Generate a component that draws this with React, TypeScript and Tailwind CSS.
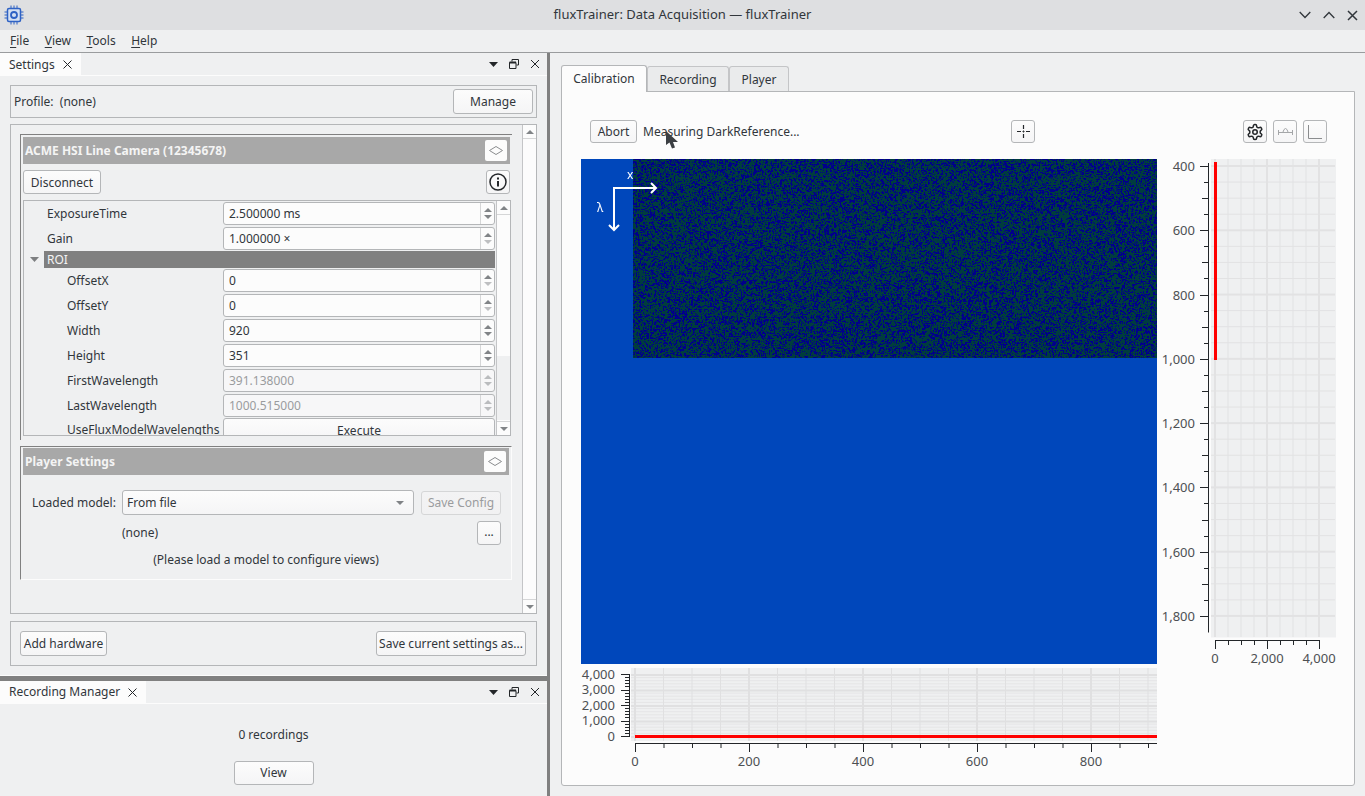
import { useEffect, useRef } from 'react';
import type { ReactNode } from 'react';

const btnBase = 'flex items-center whitespace-nowrap rounded-[3px] border bg-gradient-to-b';
const btn = `${btnBase} justify-center border-[#b4b6b8] from-[#fcfcfc] to-[#f5f5f6]`;

const Arrow = ({ dir, faded }: { dir: 'up' | 'down'; faded?: boolean }) => (
  <svg width="8" height="4" viewBox="0 0 8 4" className={faded ? 'opacity-30' : 'opacity-60'}>
    <path d={dir === 'up' ? 'M0 4 L4 0 L8 4Z' : 'M0 0 L4 4 L8 0Z'} fill="#31363b" />
  </svg>
);

const SpinRow = ({
  label,
  value,
  indent,
  disabled,
  dimDown,
}: {
  label: string;
  value: string;
  indent?: boolean;
  disabled?: boolean;
  dimDown?: boolean;
}) => (
  <div className="flex h-[25px] shrink-0 items-center">
    <span className={`w-[199px] whitespace-nowrap ${indent ? 'pl-[43px]' : 'pl-[23px]'}`}>{label}</span>
    <div
      className={`flex h-[23px] w-[272px] items-center rounded-[3px] border border-[#b4b6b8] ${disabled ? 'bg-[#f7f7f8] text-[#9a9c9e]' : 'bg-[#fcfcfc]'}`}
    >
      <span className="flex-1 pl-[5px]">{value}</span>
      <div className="flex h-full w-[14px] flex-col items-center justify-center gap-[3px] border-l border-[#d5d6d7]">
        <Arrow dir="up" faded={disabled} />
        <Arrow dir="down" faded={disabled || dimDown} />
      </div>
    </div>
  </div>
);

const Scrollbar = ({ thumbTop, thumbHeight }: { thumbTop: number; thumbHeight: number }) => (
  <div className="relative flex w-[14px] shrink-0 flex-col justify-between border-l border-[#c4c5c7] bg-[#fcfcfc]">
    <div className="flex h-[14px] items-center justify-center border-b border-[#d5d6d7]">
      <Arrow dir="up" />
    </div>
    <div
      className="absolute left-0 right-0 bg-[#eff0f1]"
      style={{ top: thumbTop, height: thumbHeight }}
    />
    <div className="flex h-[14px] items-center justify-center border-t border-[#d5d6d7]">
      <Arrow dir="down" />
    </div>
  </div>
);

const DockButtons = () => (
  <div className="flex items-center gap-[11px] pr-[7px]">
    <svg width="9" height="5" viewBox="0 0 9 5">
      <path d="M0 0 L9 0 L4.5 5Z" fill="#232629" />
    </svg>
    <svg width="10" height="10" viewBox="0 0 10 10" fill="none" stroke="#232629">
      <path d="M3 2.5V.5H9.5V6H7.5" />
      <path d="M.5 3.5H7V9.5H.5Z" />
      <path d="M.5 3.5H7" strokeWidth="2" />
    </svg>
    <svg width="10" height="10" viewBox="0 0 10 10" fill="none" stroke="#232629">
      <path d="M1 1L9 9M9 1L1 9" />
    </svg>
  </div>
);

const DockHeader = ({ title, width }: { title: string; width: string }) => (
  <div className="flex h-[23px] shrink-0 items-center justify-between border-b border-[#fcfcfc]">
    <div className={`flex h-full items-center gap-[8px] bg-[#fcfcfc] pl-[9px] ${width}`}>
      <span>{title}</span>
      <svg width="9" height="9" viewBox="0 0 9 9" fill="none" stroke="#232629">
        <path d="M.5 .5L8.5 8.5M8.5 .5L.5 8.5" />
      </svg>
    </div>
    <DockButtons />
  </div>
);

const Diamond = () => (
  <div className="flex h-[21px] w-[22px] items-center justify-center rounded-[2px] bg-[#fcfcfc]">
    <svg width="14" height="9" viewBox="0 0 14 9" fill="none" stroke="#8a8c8e">
      <path d="M.5 4.5L7 .5L13.5 4.5L7 8.5Z" />
    </svg>
  </div>
);

const GroupHeader = ({ title }: { title: string }) => (
  <div className="mx-[2px] flex h-[27px] items-center justify-between bg-[#a8a8a8] pl-[2px] pr-[3px] font-bold text-[#f4f4f4]">
    <span>{title}</span>
    <Diamond />
  </div>
);

const SettingsPanel = () => (
  <div className="flex h-[490px] border border-[#b4b6b8]">
    <div className="min-w-0 flex-1 pl-[9px] pt-[9px]">
      {/* camera group */}
      <div className="h-[306px] overflow-hidden border-l border-t border-[#808080] pt-[2px]">
        <GroupHeader title="ACME HSI Line Camera (12345678)" />
        <div className="flex items-center justify-between pl-[2px] pr-[2px] pt-[6px]">
          <button className={`${btn} h-[24px] w-[78px] pt-[1px]`}>Disconnect</button>
          <button className={`${btn} h-[24px] w-[24px]`}>
            <svg width="20" height="20" viewBox="0 0 20 20" fill="none" stroke="#232629" strokeWidth="1.5">
              <circle cx="10" cy="10" r="8" />
              <path d="M10 9V14.5" strokeWidth="2" />
              <path d="M10 5.5V7.5" strokeWidth="2" />
            </svg>
          </button>
        </div>
        <div className="ml-[2px] mt-[6px] flex h-[236px] w-[488px] border border-[#b4b6b8]">
          <div className="flex min-w-0 flex-1 flex-col overflow-hidden">
            <SpinRow label="ExposureTime" value="2.500000 ms" />
            <SpinRow label="Gain" value="1.000000 ×" dimDown />
            <div className="flex h-[17px] shrink-0 items-center">
              <svg width="9" height="5" viewBox="0 0 9 5" className="ml-[6px] mr-[5px] opacity-70">
                <path d="M0 0 L9 0 L4.5 5Z" fill="#4d5053" />
              </svg>
              <div className="flex h-full w-[451px] items-center bg-[#808080] pl-[3px] text-[#f4f4f4]">ROI</div>
            </div>
            <SpinRow indent label="OffsetX" value="0" dimDown />
            <SpinRow indent label="OffsetY" value="0" dimDown />
            <SpinRow indent label="Width" value="920" />
            <SpinRow indent label="Height" value="351" />
            <SpinRow indent disabled label="FirstWavelength" value="391.138000" />
            <SpinRow indent disabled label="LastWavelength" value="1000.515000" />
            <div className="flex h-[25px] shrink-0 items-start">
              <span className="w-[199px] whitespace-nowrap pl-[43px] pt-[3px]">UseFluxModelWavelengths</span>
              <button className={`${btn} h-[24px] w-[272px] pt-[2px]`}>Execute</button>
            </div>
          </div>
          <Scrollbar thumbTop={155} thumbHeight={64} />
        </div>
      </div>
      {/* player group */}
      <div className="mt-[6px] h-[134px] border border-b-[#fcfcfc] border-l-[#808080] border-r-[#fcfcfc] border-t-[#808080] pt-[1px]">
        <GroupHeader title="Player Settings" />
        <div className="mt-[15px] flex h-[25px] items-center pl-[11px] pr-[10px]">
          <span className="w-[90px]">Loaded model:</span>
          <div className={`${btnBase} h-[25px] w-[292px] justify-between border-[#b4b6b8] from-[#fcfcfc] to-[#f5f5f6] pl-[4px] pr-[9px]`}>
            <span>From file</span>
            <Arrow dir="down" />
          </div>
          <button className={`${btnBase} ml-[7px] h-[24px] w-[80px] justify-center border-[#d5d6d7] from-[#f3f3f4] to-[#f1f1f2] text-[#9a9c9e]`}>
            Save Config
          </button>
        </div>
        <div className="mt-[6px] flex h-[24px] items-center justify-between pl-[101px] pr-[10px]">
          <span>(none)</span>
          <button className={`${btn} h-[24px] w-[24px] pb-[2px]`}>...</button>
        </div>
        <div className="mt-[3px] text-center leading-[24px]">(Please load a model to configure views)</div>
      </div>
    </div>
    <div className="ml-[10px] flex">
      <Scrollbar thumbTop={0} thumbHeight={0} />
    </div>
  </div>
);

const LeftColumn = () => (
  <div className="flex w-[547px] shrink-0 flex-col">
    <DockHeader title="Settings" width="w-[81px] pt-[1px]" />
    <div className="flex h-[600px] flex-col px-[10px] pt-[9px]">
      <div className="flex h-[33px] items-center justify-between border border-[#b4b6b8] pl-[3px] pr-[3px]">
        <span className="whitespace-pre">Profile:  (none)</span>
        <button className={`${btn} h-[25px] w-[80px]`}>Manage</button>
      </div>
      <div className="mt-[6px]">
        <SettingsPanel />
      </div>
      <div className="mt-[7px] flex h-[45px] items-center justify-between border border-[#b4b6b8] pl-[9px] pr-[10px]">
        <button className={`${btn} h-[25px] w-[87px]`}>Add hardware</button>
        <button className={`${btn} h-[25px] w-[150px]`}>Save current settings as...</button>
      </div>
    </div>
    <div className="-mt-[1px] h-[1px] bg-[#fcfcfc]" />
    <div className="h-[5px] shrink-0 bg-[#808080]" />
    <DockHeader title="Recording Manager" width="w-[146px]" />
    <div className="flex flex-1 flex-col items-center pt-[22px]">
      <span className="leading-[18px]">0 recordings</span>
      <button className={`${btn} mt-[17px] h-[24px] w-[80px]`}>View</button>
    </div>
  </div>
);

const NoiseImage = () => {
  const ref = useRef<HTMLCanvasElement>(null);
  useEffect(() => {
    const ctx = ref.current?.getContext('2d');
    if (!ctx) return;
    const { width, height } = ctx.canvas;
    const img = ctx.createImageData(width, height);
    let seed = 12345;
    const rnd = () => {
      seed = (seed * 1664525 + 1013904223) >>> 0;
      return (seed >>> 8) / 16777216;
    };
    const cells = new Uint8Array(width * height);
    for (let y = 0; y < height; y++) {
      // some rows come out greener or bluer, like line noise on the sensor
      const bias = rnd() * 0.16 - 0.08;
      for (let x = 0; x < width; x++) {
        const r = rnd();
        let green: number;
        if (r < 0.12 && x > 0) green = cells[y * width + x - 1];
        else if (r < 0.24 && y > 0) green = cells[(y - 1) * width + x];
        else green = rnd() < 0.62 + bias ? 1 : 0;
        cells[y * width + x] = green;
        const i = (y * width + x) * 4;
        img.data[i] = 0;
        img.data[i + 1] = green ? 60 : 0;
        img.data[i + 2] = green ? 62 : 138;
        img.data[i + 3] = 255;
      }
    }
    ctx.putImageData(img, 0, 0);
  }, []);
  return <canvas ref={ref} width={524} height={199} className="block h-[199px] w-[524px]" />;
};

const HeatMap = () => (
  <div className="relative h-[505px] w-[576px] bg-[#0047bb]">
    <div className="pl-[52px]">
      <NoiseImage />
    </div>
    <svg width="90" height="80" viewBox="0 0 90 80" className="absolute left-0 top-0" fill="none" stroke="#fff" strokeWidth="2">
      <path d="M33 71V29H75" />
      <path d="M70 24L75 29L70 34" />
      <path d="M28 66L33 71L38 66" />
    </svg>
    <span className="absolute left-[46px] top-[7px] text-white">x</span>
    <span className="absolute left-[16px] top-[40px] text-white">λ</span>
  </div>
);

const range = (from: number, to: number, step: number) => {
  const out: number[] = [];
  for (let v = from; v <= to + 0.01; v += step) out.push(v);
  return out;
};

const labelClass = 'fill-[#4d5053] text-[13px]';

const SidePlot = () => {
  const ys = range(7, 473, 16.07);
  const xs = range(58, 162, 13);
  const tickStart = (i: number) => (i % 4 === 0 ? 43 : i % 2 === 0 ? 45 : 47);
  return (
    <svg width="183" height="511" viewBox="0 0 183 511" className="block">
      <rect x="54" y="0" width="125" height="478.5" fill="#eff0f1" />
      {ys.map((y, i) => (
        <rect key={y} x="54" y={y - (i % 4 === 0 ? 1 : 0.5)} width="124" height={i % 4 === 0 ? 2 : 1} fill="#e2e2e3" />
      ))}
      {xs.map((x, i) => (
        <rect key={x} x={x - (i % 4 === 0 ? 1 : 0.5)} y="0" width={i % 4 === 0 ? 2 : 1} height="478" fill="#e2e2e3" />
      ))}
      <rect x="57" y="3" width="3" height="198" fill="#ff0000" />
      <path d="M51.5 4V473.5" stroke="#232629" fill="none" />
      {ys.map((y, i) => (
        <path key={y} d={`M${tickStart(i)} ${Math.round(y) + 0.5}H51`} stroke="#232629" />
      ))}
      {['400', '600', '800', '1,000', '1,200', '1,400', '1,600', '1,800'].map((t, i) => (
        <text key={t} x="38" y={7 + i * 64.28 + 5} textAnchor="end" className={labelClass}>
          {t}
        </text>
      ))}
      <path d="M58 481.5H162" stroke="#232629" />
      {xs.map((x, i) => (
        <path key={x} d={`M${x + 0.5} 481V${i % 4 === 0 ? 490 : 486}`} stroke="#232629" />
      ))}
      {['0', '2,000', '4,000'].map((t, i) => (
        <text key={t} x={58 + i * 52} y="504" textAnchor="middle" className={labelClass}>
          {t}
        </text>
      ))}
    </svg>
  );
};

const BottomPlot = () => {
  const xs = range(54, 576, 28.5);
  const hs = range(10, 72, 3.1);
  return (
    <svg width="576" height="111" viewBox="0 0 576 111" className="block">
      <rect x="50" y="4" width="526" height="73" fill="#eff0f1" />
      {hs.map((y, i) => (
        <rect key={y} x="50" y={y} width="526" height={i % 5 === 0 ? 2 : 1} fill={i % 5 === 0 ? '#e0e0e1' : '#e5e5e6'} />
      ))}
      {xs.map((x, i) => (
        <rect key={x} x={x - (i % 4 === 0 ? 1 : 0.5)} y="4" width={i % 4 === 0 ? 2 : 1} height="73" fill="#e0e0e1" />
      ))}
      <rect x="54" y="71" width="522" height="3" fill="#ff0000" />
      <path d="M48.5 10V73" stroke="#232629" />
      {hs.map((y, i) => (
        <path key={y} d={`M${i % 5 === 0 ? 40 : 44} ${Math.round(y) + 0.5}H48`} stroke="#232629" />
      ))}
      {['4,000', '3,000', '2,000', '1,000', '0'].map((t, i) => (
        <text key={t} x="34" y={14.5 + i * 15.6} textAnchor="end" className={labelClass}>
          {t}
        </text>
      ))}
      <path d="M54 79.5H576" stroke="#232629" />
      {xs.map((x, i) => (
        <path key={x} d={`M${x + 0.5} 79V${i % 4 === 0 ? 88 : 84}`} stroke="#232629" />
      ))}
      {['0', '200', '400', '600', '800'].map((t, i) => (
        <text key={t} x={54 + i * 114} y="102" textAnchor="middle" className={labelClass}>
          {t}
        </text>
      ))}
    </svg>
  );
};

const ToolButton = ({ children }: { children: ReactNode }) => (
  <button className={`${btn} h-[23px] w-[24px]`}>{children}</button>
);

const Calibration = () => (
  <div className="flex h-[695px] flex-col rounded-b-[3px] border border-[#b4b6b8] bg-[#fcfcfc] pl-[19px] pt-[28px]">
    <div className="relative flex h-[23px] items-center pl-[9px]">
      <button className={`${btn} h-[23px] w-[47px] pt-[1px]`}>Abort</button>
      <span className="ml-[6px] pt-[1px]">Measuring DarkReference...</span>
      <div className="absolute left-[430px] top-0">
        <ToolButton>
          <svg width="13" height="13" viewBox="0 0 13 13" stroke="#232629" fill="none">
            <path d="M6.5 0V4M6.5 9V13M0 6.5H4M9 6.5H13" strokeWidth="1.2" />
            <path d="M6 6H7V7H6Z" />
          </svg>
        </ToolButton>
      </div>
      <div className="absolute left-[662px] top-0 flex gap-[6px]">
        <ToolButton>
          <svg width="18" height="18" viewBox="0 0 24 24" fill="none" stroke="#232629" strokeWidth="2">
            <path d="M12.22 2h-.44a2 2 0 0 0-2 2v.18a2 2 0 0 1-1 1.73l-.43.25a2 2 0 0 1-2 0l-.15-.08a2 2 0 0 0-2.73.73l-.22.38a2 2 0 0 0 .73 2.73l.15.1a2 2 0 0 1 1 1.72v.51a2 2 0 0 1-1 1.74l-.15.09a2 2 0 0 0-.73 2.73l.22.38a2 2 0 0 0 2.73.73l.15-.08a2 2 0 0 1 2 0l.43.25a2 2 0 0 1 1 1.73V20a2 2 0 0 0 2 2h.44a2 2 0 0 0 2-2v-.18a2 2 0 0 1 1-1.73l.43-.25a2 2 0 0 1 2 0l.15.08a2 2 0 0 0 2.73-.73l.22-.39a2 2 0 0 0-.73-2.73l-.15-.08a2 2 0 0 1-1-1.74v-.5a2 2 0 0 1 1-1.74l.15-.09a2 2 0 0 0 .73-2.73l-.22-.38a2 2 0 0 0-2.73-.73l-.15.08a2 2 0 0 1-2 0l-.43-.25a2 2 0 0 1-1-1.73V4a2 2 0 0 0-2-2z" />
            <circle cx="12" cy="12" r="3" />
          </svg>
        </ToolButton>
        <ToolButton>
          <svg width="15" height="9" viewBox="0 0 15 9" fill="none" stroke="#a4a6a8">
            <path d="M.5 3V8M14.5 3V8M.5 5.5H14.5" />
            <path d="M5 5L6 2.5L7.5 1.5L9 2.5L10 5" />
          </svg>
        </ToolButton>
        <ToolButton>
          <svg width="14" height="14" viewBox="0 0 14 14" fill="none" stroke="#8a8c8e">
            <path d="M.5 0V13.5H14" />
          </svg>
        </ToolButton>
      </div>
    </div>
    <div className="mt-[16px] flex">
      <div className="flex flex-col">
        <HeatMap />
        <BottomPlot />
      </div>
      <SidePlot />
    </div>
  </div>
);

const RightColumn = () => (
  <div className="flex min-w-0 flex-1 flex-col pl-[11px] pr-[10px] pt-[11px]">
    <div className="flex h-[27px] items-end">
      <div className="relative top-[1px] z-10 flex h-[27px] w-[86px] items-center justify-center rounded-t-[3px] border border-b-0 border-[#b4b6b8] bg-[#fcfcfc]">
        Calibration
      </div>
      <div className="flex h-[25px] w-[82px] items-center justify-center rounded-t-[3px] border border-b-0 border-[#c4c5c7] bg-[#eaebec] pt-[1px]">
        Recording
      </div>
      <div className="flex h-[25px] w-[60px] items-center justify-center rounded-t-[3px] border border-b-0 border-[#c4c5c7] bg-[#eaebec] pt-[1px]">
        Player
      </div>
    </div>
    <Calibration />
  </div>
);

const TitleBar = () => (
  <div className="relative flex h-[30px] shrink-0 items-center justify-center bg-[#dedfe1]">
    <svg width="20" height="20" viewBox="0 0 20 20" fill="none" stroke="#2f62c4" className="absolute left-[4px] top-[5px]">
      <rect x="3.5" y="3.5" width="13" height="13" rx="1.5" strokeWidth="1.5" fill="#d5e0f2" />
      <circle cx="10" cy="10" r="3" strokeWidth="1.8" />
      <path d="M7 0.5V3M10 0.5V3M13 0.5V3M7 17V19.5M10 17V19.5M13 17V19.5M0.5 7H3M0.5 10H3M0.5 13H3M17 7H19.5M17 10H19.5M17 13H19.5" strokeWidth="1" />
    </svg>
    <span className="text-[13px] text-[#31363b]">fluxTrainer: Data Acquisition — fluxTrainer</span>
    <div className="absolute right-[7px] top-[11px] flex gap-[12px]">
      <svg width="12" height="8" viewBox="0 0 12 8" fill="none" stroke="#31363b" strokeWidth="1.3">
        <path d="M.7 1L6 6.5L11.3 1" />
      </svg>
      <svg width="12" height="8" viewBox="0 0 12 8" fill="none" stroke="#31363b" strokeWidth="1.3">
        <path d="M.7 7L6 1.5L11.3 7" />
      </svg>
      <svg width="11" height="11" viewBox="0 0 11 11" fill="none" stroke="#31363b" strokeWidth="1.5" className="-mt-[1px]">
        <path d="M1 1L10 10M10 1L1 10" />
      </svg>
    </div>
  </div>
);

const MenuItem = ({ first, rest }: { first: string; rest: string }) => (
  <span>
    <span className="underline underline-offset-2">{first}</span>
    {rest}
  </span>
);

const MenuBar = () => (
  <div className="flex h-[23px] shrink-0 items-center gap-[15.5px] border-b border-[#9a9c9e] pb-[1px] pl-[10px]">
    <MenuItem first="F" rest="ile" />
    <MenuItem first="V" rest="iew" />
    <MenuItem first="T" rest="ools" />
    <MenuItem first="H" rest="elp" />
  </div>
);

const Cursor = () => (
  <svg width="13" height="18" viewBox="0 0 13 18" className="absolute left-[666px] top-[131px]">
    <path d="M0 0V14L3.5 11.5L6 17.5L9 16.5L7 11H12Z" fill="#3b3f43" />
  </svg>
);

export default function App() {
  return (
    <div className="relative flex h-[796px] w-[1365px] flex-col overflow-hidden bg-[#eff0f1] font-['Noto_Sans',sans-serif] text-[12px] text-[#31363b]">
      <TitleBar />
      <MenuBar />
      <div className="flex min-h-0 flex-1">
        <LeftColumn />
        <div className="w-[3px] shrink-0 bg-[#808080]" />
        <RightColumn />
      </div>
      <Cursor />
    </div>
  );
}
